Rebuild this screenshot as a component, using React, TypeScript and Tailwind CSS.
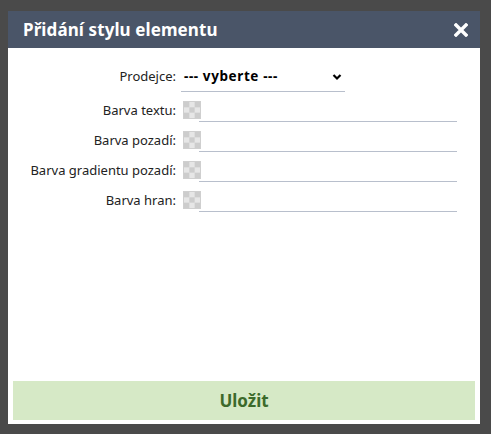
import React from 'react';

const fields = ['Barva textu:', 'Barva pozadí:', 'Barva gradientu pozadí:', 'Barva hran:'];

function Swatch() {
  return (
    <svg width="18" height="18" viewBox="0 0 18 18" className="shrink-0">
      <rect x="0" y="0" width="18" height="18" fill="#e6e6e6" />
      <rect x="1" y="1" width="5.33" height="5.33" fill="#cccccc" />
      <rect x="11.67" y="1" width="5.33" height="5.33" fill="#cccccc" />
      <rect x="6.33" y="6.33" width="5.33" height="5.33" fill="#cccccc" />
      <rect x="1" y="11.67" width="5.33" height="5.33" fill="#cccccc" />
      <rect x="11.67" y="11.67" width="5.33" height="5.33" fill="#cccccc" />
      <rect x="0.5" y="0.5" width="17" height="17" fill="none" stroke="#cfcfcf" />
    </svg>
  );
}

export default function App() {
  return (
    <div
      className="w-[491px] h-[434px] bg-[#4a4a4a] pt-[11px] px-[8px]"
      style={{ fontFamily: '"Noto Sans", "Open Sans", sans-serif' }}
    >
      <div className="w-[472px] h-[413px] bg-white flex flex-col">
        <div className="h-[37px] bg-[#4a5568] pl-[15px] pr-[12px] flex items-center justify-between">
          <span className="text-white font-bold text-[17px] tracking-[0.1px]">Přidání stylu elementu</span>
          <svg width="14" height="14" viewBox="0 0 14 14">
            <path d="M2 2 L12 12 M12 2 L2 12" stroke="#ffffff" strokeWidth="3.4" strokeLinecap="square" />
          </svg>
        </div>

        <div className="flex-1 pt-[14px]">
          <div className="flex h-[30px] items-center">
            <div className="w-[168px] text-right text-[13px] text-[#222]">Prodejce:</div>
            <div className="ml-[5px] w-[164px] h-[30px] border-b border-[#b8bfcc] flex items-center justify-between pl-[3px] pr-[3px]">
              <span className="text-[13.5px] font-bold text-black tracking-[0.6px]">--- vyberte ---</span>
              <svg width="10" height="8" viewBox="0 0 10 8">
                <path d="M1.5 2 L5 5.5 L8.5 2" fill="none" stroke="#000" strokeWidth="2.2" />
              </svg>
            </div>
          </div>

          {fields.map((f) => (
            <div key={f} className="flex h-[30px]">
              <div className="w-[168px] text-right text-[13px] text-[#222] pt-[9px]">{f}</div>
              <div className="ml-[7px] pt-[9px]">
                <Swatch />
              </div>
              <div className="ml-[-2px] w-[258px] h-[30px] border-b border-[#b8bfcc]" />
            </div>
          ))}
        </div>

        <div className="px-[5px] pb-[4px]">
          <button className="w-full h-[39px] bg-[#d6e9c6] text-[#3c6a2b] font-bold text-[17px]">Uložit</button>
        </div>
      </div>
    </div>
  );
}
